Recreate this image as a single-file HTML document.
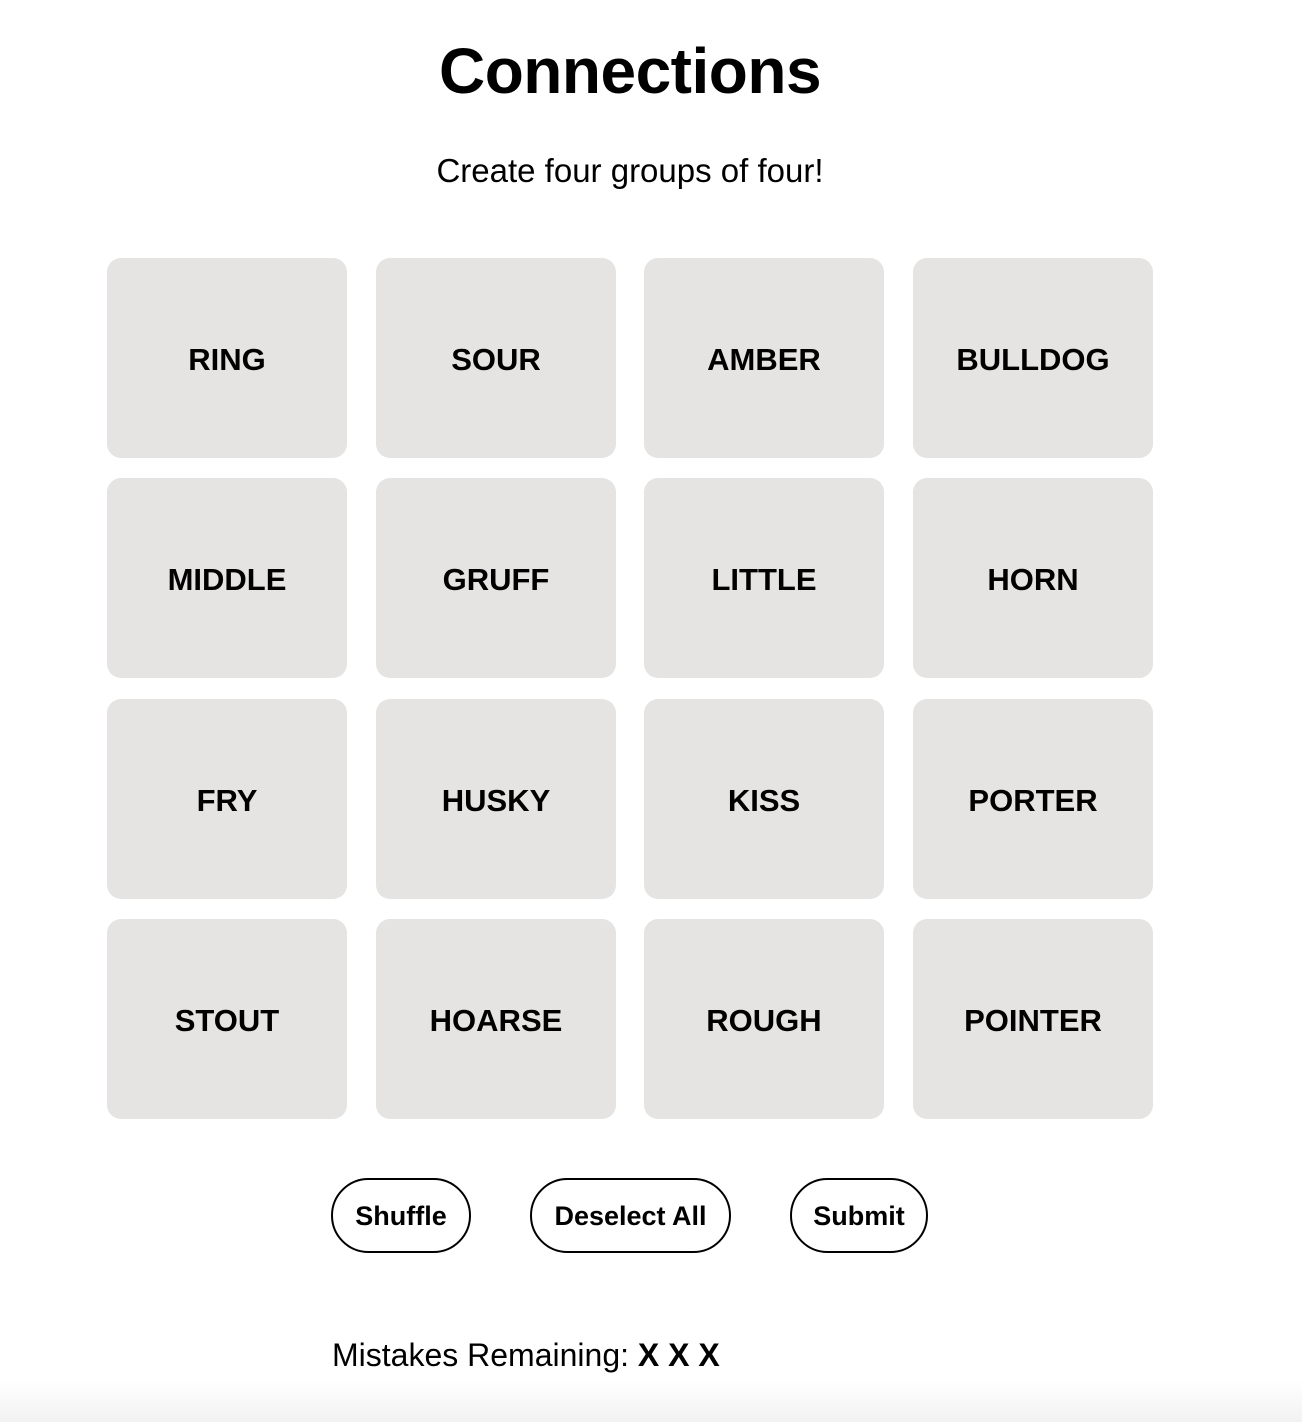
<!DOCTYPE html>
<html><head><style>
body{margin:0;width:1302px;height:1422px;background:#fff;font-family:"Liberation Sans",Arial,sans-serif;color:#000;position:relative;overflow:hidden}
h1{position:absolute;left:0;width:1260px;top:33px;margin:0;text-align:center;font-size:64px;font-weight:bold;line-height:76px;letter-spacing:-0.5px}
.sub{position:absolute;left:0;width:1260px;top:151px;text-align:center;font-size:33px;line-height:40px}
.t{position:absolute;width:240px;height:200px;border-radius:14px;background:#e5e4e2;display:flex;align-items:center;justify-content:center;font-weight:bold;font-size:31px;padding-top:3px;box-sizing:border-box}
.b{position:absolute;top:1178px;height:75px;box-sizing:border-box;border:2px solid #000;border-radius:38px;display:flex;align-items:center;justify-content:center;font-weight:bold;font-size:27px;padding-top:2px}
.m{position:absolute;left:332px;top:1335px;font-size:32px;line-height:40px}
.fade{position:absolute;left:0;right:0;top:1380px;height:42px;background:linear-gradient(#fff,#f2f2f2)}
</style></head><body>
<h1>Connections</h1>
<div class="sub">Create four groups of four!</div>
<div class="t" style="left:107px;top:258px">RING</div>
<div class="t" style="left:376px;top:258px">SOUR</div>
<div class="t" style="left:644px;top:258px">AMBER</div>
<div class="t" style="left:913px;top:258px">BULLDOG</div>
<div class="t" style="left:107px;top:478px">MIDDLE</div>
<div class="t" style="left:376px;top:478px">GRUFF</div>
<div class="t" style="left:644px;top:478px">LITTLE</div>
<div class="t" style="left:913px;top:478px">HORN</div>
<div class="t" style="left:107px;top:699px">FRY</div>
<div class="t" style="left:376px;top:699px">HUSKY</div>
<div class="t" style="left:644px;top:699px">KISS</div>
<div class="t" style="left:913px;top:699px">PORTER</div>
<div class="t" style="left:107px;top:919px">STOUT</div>
<div class="t" style="left:376px;top:919px">HOARSE</div>
<div class="t" style="left:644px;top:919px">ROUGH</div>
<div class="t" style="left:913px;top:919px">POINTER</div>
<div class="b" style="left:331px;width:140px">Shuffle</div>
<div class="b" style="left:530px;width:201px">Deselect All</div>
<div class="b" style="left:790px;width:138px">Submit</div>
<div class="fade"></div>
<div class="m">Mistakes Remaining: <b>X X X</b></div>
</body></html>
